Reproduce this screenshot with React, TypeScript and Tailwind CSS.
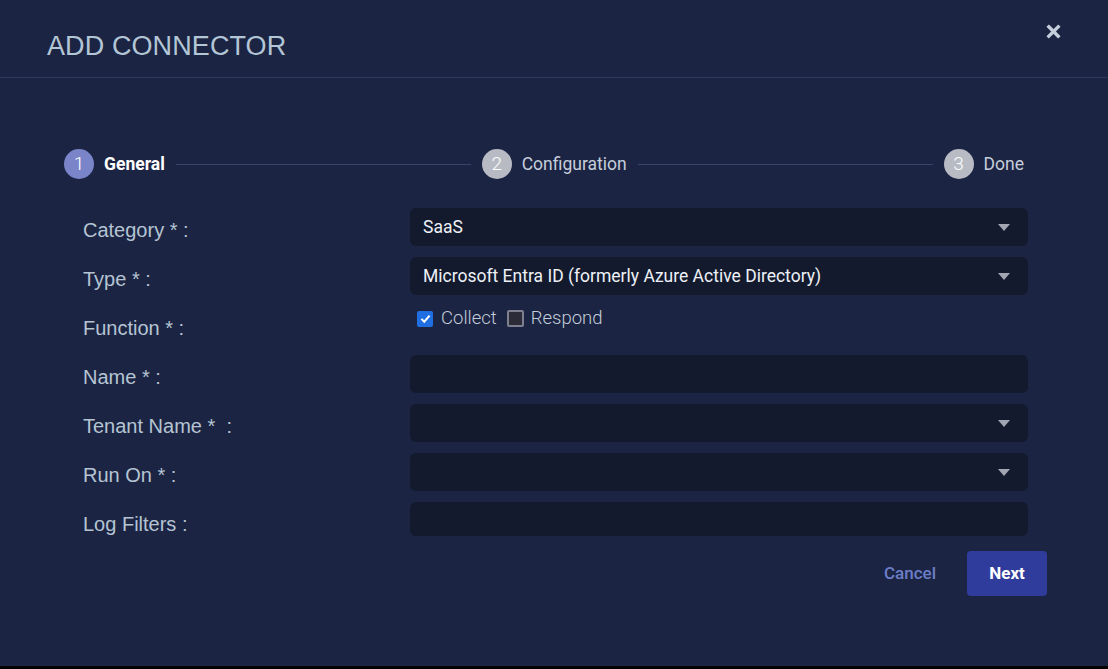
import React from 'react';

const arial = { fontFamily: '"Liberation Sans", Arial, sans-serif' };
const roboto = { fontFamily: 'Roboto, "Noto Sans", sans-serif' };

function Caret() {
  return (
    <svg className="w-[12px] h-[7px] text-[#a2a6b2]" viewBox="0 0 12 7">
      <path d="M0 0 L12 0 L6 7 Z" fill="currentColor" />
    </svg>
  );
}

function Step({ n, label, active }: { n: number; label: string; active?: boolean }) {
  return (
    <div className="flex items-center gap-[10px] shrink-0">
      <div
        className={`w-[30px] h-[30px] rounded-full flex items-center justify-center text-white text-[19px] font-light ${
          active ? 'bg-[#7a85c9]' : 'bg-[#b8bbc4]'
        }`}
      >
        {n}
      </div>
      <span className={`text-[17.5px] ${active ? 'font-bold text-white' : 'text-[#c6cedb]'}`}>{label}</span>
    </div>
  );
}

function SelectBox({ value, caret = true, tall = true }: { value?: string; caret?: boolean; tall?: boolean }) {
  return (
    <div
      className={`w-[618px] ${tall ? 'h-[38px]' : 'h-[34px]'} rounded-[6px] bg-[#131a2d] flex items-center justify-between pl-[13px] pr-[18px] text-[17.5px] text-[#eef1f7]`}
      style={roboto}
    >
      <span>{value}</span>
      {caret && <Caret />}
    </div>
  );
}

function Row({ label, children }: { label: string; children: React.ReactNode }) {
  return (
    <div className="flex items-start">
      <div className="w-[327px] h-[38px] pt-[6px] leading-[32px] text-[20px] text-[#b5c4d3] whitespace-pre" style={arial}>
        {label}
      </div>
      {children}
    </div>
  );
}

export default function App() {
  return (
    <div className="w-[1108px] h-[669px] bg-black overflow-hidden">
      <div className="h-[666px] bg-[#1c2443] relative" style={roboto}>
        <div className="h-[78px] border-b border-[#2e385a] flex items-center pl-[47px] pt-[15px]">
          <h1 className="text-[27px] text-[#b3c6d6] tracking-[0.1px]" style={arial}>
            ADD CONNECTOR
          </h1>
        </div>
        <button className="absolute left-[1045px] top-[23px] w-[16px] h-[16px] flex items-center justify-center">
          <svg viewBox="0 0 16 16" className="w-[15px] h-[15px]">
            <path d="M3 3 L13 13 M13 3 L3 13" stroke="#c3ceda" strokeWidth="3.6" strokeLinecap="square" />
          </svg>
        </button>

        <div className="flex items-center pl-[64px] pr-[84px] mt-[71px]">
          <Step n={1} label="General" active />
          <div className="flex-1 h-px bg-[#3a4466] mx-[11px]" />
          <Step n={2} label="Configuration" />
          <div className="flex-1 h-px bg-[#3a4466] mx-[11px]" />
          <Step n={3} label="Done" />
        </div>

        <div className="pl-[83px] mt-[29px] flex flex-col gap-[11px]">
          <Row label="Category * :">
            <SelectBox value="SaaS" />
          </Row>
          <Row label="Type * :">
            <SelectBox value="Microsoft Entra ID (formerly Azure Active Directory)" />
          </Row>
          <Row label="Function * :">
            <div className="h-[25px] flex items-center pl-[7px] gap-[10px] text-[18.5px] font-light text-[#c3cdd9]">
              <label className="flex items-center gap-[8px]">
                <span className="w-[16px] h-[16px] rounded-[2px] bg-[#1f6fe3] flex items-center justify-center">
                  <svg viewBox="0 0 16 16" className="w-[13px] h-[13px]">
                    <path d="M3 8.5 L6.5 12 L13 4.5" fill="none" stroke="white" strokeWidth="2.4" />
                  </svg>
                </span>
                Collect
              </label>
              <label className="flex items-center gap-[7px]">
                <span className="w-[17px] h-[17px] rounded-[2px] bg-[#2b2c38] border-2 border-[#7e8090]" />
                Respond
              </label>
            </div>
          </Row>
          <Row label="Name * :">
            <SelectBox caret={false} />
          </Row>
          <Row label="Tenant Name *  :">
            <SelectBox />
          </Row>
          <Row label="Run On * :">
            <SelectBox />
          </Row>
          <Row label="Log Filters :">
            <SelectBox caret={false} tall={false} />
          </Row>
        </div>

        <div className="flex justify-end items-center gap-[31px] pr-[61px] mt-[11px]">
          <button className="text-[17px] font-medium text-[#6c7ec8]">Cancel</button>
          <button className="w-[80px] h-[45px] rounded-[4px] bg-[#303c9c] text-white text-[17px] font-bold">
            Next
          </button>
        </div>
      </div>
    </div>
  );
}
